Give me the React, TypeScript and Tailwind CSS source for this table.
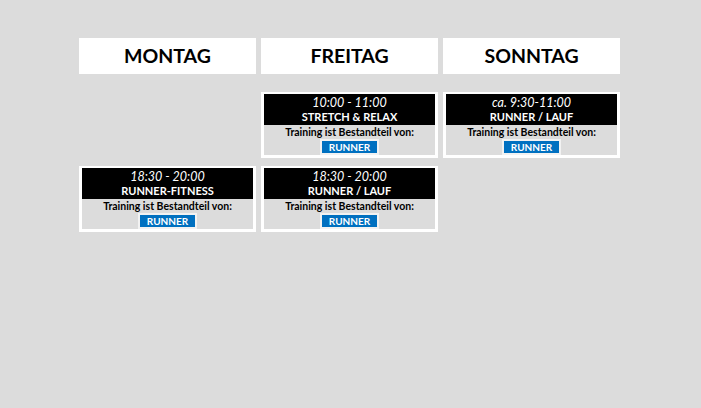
type Session = {
  time: string;
  title: string;
};

const days = ["MONTAG", "FREITAG", "SONNTAG"];

// rows of the timetable, one slot per day (null = no training)
const rows: (Session | null)[][] = [
  [
    null,
    { time: "10:00 - 11:00", title: "STRETCH & RELAX" },
    { time: "ca. 9:30-11:00", title: "RUNNER / LAUF" },
  ],
  [
    { time: "18:30 - 20:00", title: "RUNNER-FITNESS" },
    { time: "18:30 - 20:00", title: "RUNNER / LAUF" },
    null,
  ],
];

function SessionCard({ session }: { session: Session }) {
  return (
    <div className="bg-white px-[3px] pb-[3px] pt-[2px]">
      <div className="flex h-[31px] flex-col items-center justify-center bg-black text-white">
        <span className="text-[12.5px] italic leading-[15px]">{session.time}</span>
        <span className="text-[11px] font-bold leading-[14px]">{session.title}</span>
      </div>
      <div className="flex h-[30px] flex-col items-center bg-[#dcdcdc]">
        <span className="text-[10.5px] font-bold leading-[14px] text-black">
          Training ist Bestandteil von:
        </span>
        <span className="flex h-[16px] w-[59px] items-center justify-center border-2 border-[#f2f2f2] bg-[#0070c0] text-[10px] font-bold leading-none text-white">
          RUNNER
        </span>
      </div>
    </div>
  );
}

export default function App() {
  return (
    <div className="h-[408px] w-[701px] bg-[#dcdcdc] pl-[79px] pt-[38px] font-['Lato',sans-serif]">
      <div className="grid grid-cols-[177px_177px_177px] gap-x-[5px]">
        {days.map((day) => (
          <div
            key={day}
            className="flex h-[36px] items-center justify-center bg-white text-[19.5px] font-bold text-black"
          >
            {day}
          </div>
        ))}
      </div>
      <div className="mt-[18px] flex flex-col gap-[8px]">
        {rows.map((row, i) => (
          <div key={i} className="grid grid-cols-[177px_177px_177px] gap-x-[5px]">
            {row.map((session, j) =>
              session ? <SessionCard key={j} session={session} /> : <div key={j} />,
            )}
          </div>
        ))}
      </div>
    </div>
  );
}
